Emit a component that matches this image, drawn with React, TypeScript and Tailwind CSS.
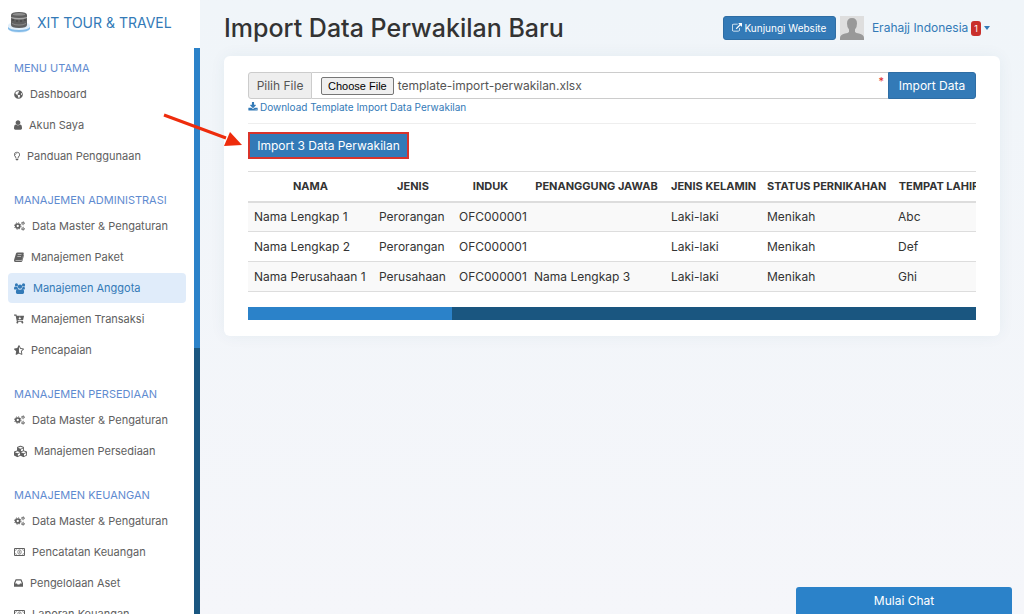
import { useEffect, useRef } from "react"
import type { ReactNode } from "react"
import {
  FaCartArrowDown,
  FaCubes,
  FaGlobeAmericas,
  FaRegLightbulb,
  FaStarHalfAlt,
} from "react-icons/fa"

/* ---------------- ICONS ---------------- */
const UserIcon = () => (
  <svg viewBox="256 128 1280 1536" width="8" height="10" fill="currentColor">
    <path d="M1536 1399q0 109-62.5 187t-150.5 78h-854q-88 0-150.5-78t-62.5-187q0-85 8.5-160.5t31.5-152 58.5-131 94-89 134.5-34.5q131 128 313 128t313-128q76 0 134.5 34.5t94 89 58.5 131 31.5 152 8.5 160.5zm-256-887q0 159-112.5 271.5t-271.5 112.5-271.5-112.5-112.5-271.5 112.5-271.5 271.5-112.5 271.5 112.5 112.5 271.5z" />
  </svg>
)

const CogsIcon = () => (
  <svg viewBox="0 0 22 20" width="11" height="10" fill="none" stroke="currentColor">
    <circle cx="7.500" cy="10" r="4" strokeWidth="3.400" />
    <circle cx="7.500" cy="10" r="6.400" strokeWidth="2" strokeDasharray="2.500 2.530" />
    <circle cx="18" cy="4.500" r="2" strokeWidth="1.800" />
    <circle cx="18" cy="4.500" r="3.300" strokeWidth="1.200" strokeDasharray="1.700 1.760" />
    <circle cx="18" cy="15.500" r="2" strokeWidth="1.800" />
    <circle cx="18" cy="15.500" r="3.300" strokeWidth="1.200" strokeDasharray="1.700 1.760" />
  </svg>
)

const UsersIcon = () => (
  <svg viewBox="0 0 22 20" width="12" height="11" fill="currentColor">
    <circle cx="4.500" cy="3.500" r="2.900" />
    <circle cx="17.500" cy="3.500" r="2.900" />
    <circle cx="11" cy="6.500" r="4" />
    <path d="M2 6.500q2.500 1.500 4.300.500.200 2.400 1.500 3.700-1.800 0-3 1.300H2.200Q0 12 0 10.300 0 6.500 2 6.500zM20 6.500q-2.500 1.500-4.300.500-.200 2.400-1.500 3.700 1.800 0 3 1.300h.600q2.200 0 2.200-1.700 0-3.800-2-3.800z" />
    <path d="M6.800 11q4.200 2.600 8.400 0 3.300 0 3.300 6 0 3-2.700 3H6.200q-2.700 0-2.700-3 0-6 3.300-6z" />
  </svg>
)

const MoneyIcon = () => (
  <svg viewBox="0 0 22 16" width="11" height="8" fill="none" stroke="currentColor">
    <path d="M1 1h20v14H1z" strokeWidth="2" />
    <path d="M2 5q3 0 3-3M20 5q-3 0-3-3M2 11q3 0 3 3M20 11q-3 0-3 3" strokeWidth="1" />
    <ellipse cx="11" cy="8" rx="3.500" ry="4.500" strokeWidth="1.300" />
    <path d="M11.200 5v6" strokeWidth="1.300" />
  </svg>
)

const BookIcon = () => (
  <svg viewBox="0 0 20 20" width="10" height="10" fill="currentColor">
    <path d="M7 1h11q2 0 1.500 2l-3.500 12q-.5 1.500-2 1.500H4q-1.500 0-1.500 1h12q1 0 1.500-1.500L19.300 5q1 .5.600 2l-3.200 11q-.6 2-2.600 2H3Q0 20 0 17q0-1 .5-2.500L4 3Q4.700 1 7 1zM7.600 5l-.3 1.200h7.500l.4-1.200zM6.800 8l-.3 1.200h7.400l.4-1.200z" fillRule="evenodd" />
  </svg>
)

const InboxIcon = () => (
  <svg viewBox="128 256 1536 1280" width="9" height="8" fill="currentColor">
    <path d="M1151 960h316q-1-3-2.500-8.500t-2.500-7.500l-212-496h-708l-212 496q-1 3-2.500 8.500t-2.500 7.500h316l95 192h320zm513 30v482q0 26-19 45t-45 19h-1408q-26 0-45-19t-19-45v-482q0-62 25-123l238-552q10-25 36.500-42t52.500-17h832q26 0 52.500 17t36.500 42l238 552q25 61 25 123z" />
  </svg>
)

const ExternalLinkIcon = () => (
  <svg viewBox="0 0 1792 1792" width="10" height="10" fill="currentColor">
    <path d="M1408 928v320q0 119-84.500 203.500t-203.500 84.500h-832q-119 0-203.500-84.500t-84.500-203.500v-832q0-119 84.500-203.500t203.500-84.500h704q14 0 23 9t9 23v64q0 14-9 23t-23 9h-704q-66 0-113 47t-47 113v832q0 66 47 113t113 47h832q66 0 113-47t47-113v-320q0-14 9-23t23-9h64q14 0 23 9t9 23zm384-864v512q0 26-19 45t-45 19-45-19l-176-176-652 652q-10 10-23 10t-23-10l-114-114q-10-10-10-23t10-23l652-652-176-176q-19-19-19-45t19-45 45-19h512q26 0 45 19t19 45z" />
  </svg>
)

const DownloadIcon = () => (
  <svg viewBox="0 0 1792 1792" width="10" height="10" fill="currentColor">
    <path d="M1344 1344q0-26-19-45t-45-19-45 19-19 45 19 45 45 19 45-19 19-45zm256 0q0-26-19-45t-45-19-45 19-19 45 19 45 45 19 45-19 19-45zm128-224v320q0 40-28 68t-68 28h-1472q-40 0-68-28t-28-68v-320q0-40 28-68t68-28h465l135 136q58 56 136 56t136-56l136-136h464q40 0 68 28t28 68zm-325-569q17 41-14 70l-448 448q-18 19-45 19t-45-19l-448-448q-31-29-14-70 17-39 59-39h256v-448q0-26 19-45t45-19h256q26 0 45 19t19 45v448h256q42 0 59 39z" />
  </svg>
)

const Logo = () => (
  <svg viewBox="0 0 24 24" width="24" height="24">
    <path d="M1 15q1-2 4-2h14q3 0 4 2v4q-3 4-11 4T1 19z" fill="#e2effa" />
    <path d="M4 5q0-3 8-3t8 3v10q0 3-8 3t-8-3z" fill="#606060" />
    <path d="M6 4q6-2 12 0v1q-6 1-12 0z" fill="#8e8e8e" />
    <path d="M4 7q8 2 16 0v1q-8 3-16 0z" fill="#a9a9a9" />
    <path d="M6 9v2M10 10v2M14 10v2M18 9v2" stroke="#3e3e3e" />
    <path d="M5 13q7 3 14 0v1q-7 3-14 0z" fill="#8b8b8b" />
    <path d="M1 17q2 3 11 3t11-3v2q-2 3-11 3T1 19z" fill="#83bbe8" />
  </svg>
)

const Avatar = () => (
  <svg viewBox="0 0 24 24" width="24" height="24" role="img" aria-label="Avatar">
    <path d="M0 0h24v24H0z" fill="#dedede" />
    <path d="M12 2q5 0 5 5.500 0 4-2 6v2.500q1 1 4 1.600 5 1.200 5 4.400v2H0v-2q0-3.200 5-4.400 3-.600 4-1.600v-2.500q-2-2-2-6Q7 2 12 2z" fill="#999" />
  </svg>
)

/* ---------------- DATA ---------------- */
type MenuItem = { label: string; icon: ReactNode; active?: boolean }

const menu: { title: string; items: MenuItem[] }[] = [
  {
    title: "MENU UTAMA",
    items: [
      { label: "Dashboard", icon: <FaGlobeAmericas size={9} /> },
      { label: "Akun Saya", icon: <UserIcon /> },
      { label: "Panduan Penggunaan", icon: <FaRegLightbulb className="h-[10px] w-[6px]" /> },
    ],
  },
  {
    title: "MANAJEMEN ADMINISTRASI",
    items: [
      { label: "Data Master & Pengaturan", icon: <CogsIcon /> },
      { label: "Manajemen Paket", icon: <BookIcon /> },
      { label: "Manajemen Anggota", icon: <UsersIcon />, active: true },
      { label: "Manajemen Transaksi", icon: <FaCartArrowDown size={10} /> },
      { label: "Pencapaian", icon: <FaStarHalfAlt size={10} /> },
    ],
  },
  {
    title: "MANAJEMEN PERSEDIAAN",
    items: [
      { label: "Data Master & Pengaturan", icon: <CogsIcon /> },
      { label: "Manajemen Persediaan", icon: <FaCubes size={13} /> },
    ],
  },
  {
    title: "MANAJEMEN KEUANGAN",
    items: [
      { label: "Data Master & Pengaturan", icon: <CogsIcon /> },
      { label: "Pencatatan Keuangan", icon: <MoneyIcon /> },
      { label: "Pengelolaan Aset", icon: <InboxIcon /> },
      { label: "Laporan Keuangan", icon: <MoneyIcon /> },
    ],
  },
]

const columns = ["NAMA", "JENIS", "INDUK", "PENANGGUNG JAWAB", "JENIS KELAMIN", "STATUS PERNIKAHAN", "TEMPAT LAHIR"]

const rows = [
  ["Nama Lengkap 1", "Perorangan", "OFC000001", "", "Laki-laki", "Menikah", "Abc"],
  ["Nama Lengkap 2", "Perorangan", "OFC000001", "", "Laki-laki", "Menikah", "Def"],
  ["Nama Perusahaan 1", "Perusahaan", "OFC000001", "Nama Lengkap 3", "Laki-laki", "Menikah", "Ghi"],
]

/* ---------------- SIDEBAR ---------------- */
function Sidebar() {
  return (
    <aside className="flex w-[200px] shrink-0 flex-col bg-white">
      <a href="#" className="flex h-12 shrink-0 items-center gap-[6px] pb-1 pl-[7px] text-[14px] whitespace-nowrap text-[#337ab7]">
        <Logo />
        XIT TOUR &amp; TRAVEL
      </a>

      <div className="flex min-h-0 flex-1">
        <nav className="min-w-0 flex-1 overflow-hidden pt-[9px] pr-2 pl-2">
          {menu.map((group) => (
            <section key={group.title} className="pb-[17px]">
              <h2 className="pl-[6px] text-[11px] leading-[22px] whitespace-nowrap text-[#5f8bd0]">{group.title}</h2>
              {group.items.map((item) => (
                <a
                  key={item.label}
                  href="#"
                  className={
                    item.active
                      ? "mb-px flex h-[30px] items-center gap-[7px] rounded bg-[#e0ecfa] pl-[6px] text-[11px] whitespace-nowrap text-[#337ab7]"
                      : "mb-px flex h-[30px] items-center gap-[7px] rounded pl-[6px] text-[11px] whitespace-nowrap text-[#606060]"
                  }
                >
                  <span className="shrink-0">{item.icon}</span>
                  {item.label}
                </a>
              ))}
            </section>
          ))}
        </nav>

        {/* scroll bar */}
        <div className="w-[6px] bg-[#1a5680]">
          <div className="h-[53%] bg-[#2b82c9]" />
        </div>
      </div>
    </aside>
  )
}

/* ---------------- TABLE ---------------- */
function ImportTable() {
  return (
    <div className="mt-3">
      <div className="overflow-hidden">
        <table className="w-[738px] table-fixed border-collapse whitespace-nowrap text-[#333]">
          <colgroup>
            <col className="w-[125px]" />
            <col className="w-[80px]" />
            <col className="w-[75px]" />
            <col className="w-[137px]" />
            <col className="w-[96px]" />
            <col className="w-[131px]" />
            <col className="w-[94px]" />
          </colgroup>
          <thead>
            <tr className="h-[30px] border-t border-b-2 border-[#ddd] text-[11px]">
              {columns.map((column) => (
                <th key={column} className="px-[6px] text-center font-bold">{column}</th>
              ))}
            </tr>
          </thead>
          <tbody className="text-[12px]">
            {rows.map((row) => (
              <tr key={row[0]} className="h-[30px] border-b border-[#ddd] odd:bg-[#f9f9f9]">
                {row.map((cell, i) => (
                  <td key={i} className="px-[6px]">{cell}</td>
                ))}
              </tr>
            ))}
          </tbody>
        </table>
      </div>

      {/* scroll bar */}
      <div className="mt-[15px] h-[13px] bg-[#1a5680]">
        <div className="h-full w-[28%] bg-[#2b82c9]" />
      </div>
    </div>
  )
}

export default function App() {
  const fileRef = useRef<HTMLInputElement | null>(null)

  useEffect(() => {
    if (!fileRef.current) return
    const transfer = new DataTransfer()
    transfer.items.add(new File([""], "template-import-perwakilan.xlsx"))
    fileRef.current.files = transfer.files
  }, [])

  return (
    <div className="relative flex h-screen overflow-hidden bg-linear-to-b from-[#f0f5f9] to-[#f5f6fa] font-['Inter',sans-serif]">
      <Sidebar />

      <main className="min-w-0 flex-1 px-6">
        {/* ================= HEADER ================= */}
        <header className="flex h-14 items-center justify-between pr-[10px]">
          <h1 className="text-[25px] leading-8 font-medium whitespace-nowrap text-[#333]">Import Data Perwakilan Baru</h1>

          <div className="flex items-center gap-1 whitespace-nowrap">
            <button className="flex h-6 w-[113px] items-center justify-center gap-[2px] rounded-[3px] border border-[#2e6da4] bg-[#337ab7] text-[10px] text-white">
              <ExternalLinkIcon />
              Kunjungi Website
            </button>
            <Avatar />
            <button className="ml-1 flex items-center gap-[3px] text-[12px] text-[#337ab7]">
              Erahajj Indonesia
              <span className="rounded-[3px] bg-[#c9302c] px-[3px] text-[9px] leading-[15px] text-white">1</span>
              <span className="border-x-[3px] border-t-4 border-x-transparent border-t-[#337ab7]" />
            </button>
          </div>
        </header>

        {/* ================= CARD ================= */}
        <div className="rounded-md bg-white px-6 py-4 shadow-[0_0_16px_rgba(40,80,120,0.06)]">
          <div className="flex h-[27px] text-[12px]">
            <label htmlFor="file" className="flex w-16 shrink-0 items-center justify-center rounded-l-[3px] border border-[#ccc] bg-[#eee] text-[#555]">
              Pilih File
            </label>
            <div className="relative flex min-w-0 flex-1 items-center border-y border-[#ccc] pl-[9px]">
              <input
                ref={fileRef}
                id="file"
                type="file"
                className="w-full text-[12px] text-[#555] file:mr-1 file:h-[18px] file:rounded-[2px] file:border file:border-solid file:border-[#767676] file:bg-[#efefef] file:px-[6px] file:font-['Liberation_Sans'] file:text-[11px] file:text-black"
              />
              <span className="absolute top-0 right-1 text-[11px] text-[#e02b27]">*</span>
            </div>
            <button className="w-[88px] shrink-0 rounded-r-[3px] border border-[#2e6da4] bg-[#337ab7] text-white">Import Data</button>
          </div>

          <a href="#" className="flex h-4 items-center gap-[2px] text-[10px] text-[#337ab7]">
            <DownloadIcon />
            Download Template Import Data Perwakilan
          </a>

          <hr className="mt-2 mb-2 border-[#eee]" />

          <button className="block h-[27px] w-[161px] border-2 border-[#d9342b] bg-[#337ab7] text-[12px] whitespace-nowrap text-white">
            Import 3 Data Perwakilan
          </button>

          <ImportTable />
        </div>
      </main>

      {/* ===== pointer to the import button ===== */}
      <svg className="pointer-events-none absolute top-[110px] left-[160px]" width="86" height="40" viewBox="0 0 86 40">
        <path d="M4 5l62 23" stroke="#ee2c0c" strokeWidth="3" />
        <path d="M70 22l12 13-18 1z" fill="#ee2c0c" />
      </svg>

      <button className="absolute right-3 bottom-0 h-[27px] w-[216px] rounded-t-[3px] bg-[#2b82c9] text-[12px] text-white">
        Mulai Chat
      </button>
    </div>
  )
}
